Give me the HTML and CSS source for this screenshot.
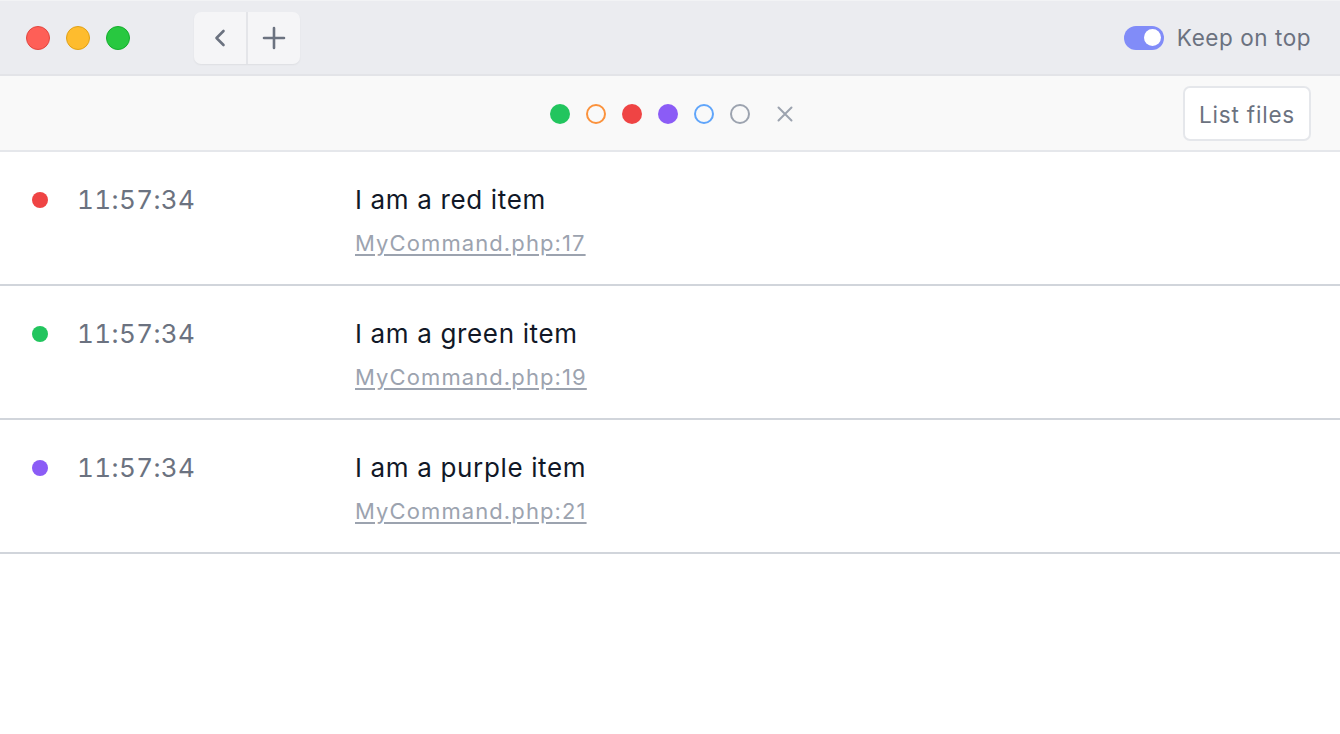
FILE: index.html
```html
<!DOCTYPE html>
<html>
<head>
<meta charset="utf-8">
<link rel="stylesheet" href="styles.css">
</head>
<body>
<div class="app">
  <header class="titlebar">
    <div class="lights">
      <span class="light red"></span>
      <span class="light yellow"></span>
      <span class="light green"></span>
    </div>
    <div class="navgroup">
      <button class="navbtn" aria-label="Back">
        <svg width="20" height="20" viewBox="0 0 20 20"><path d="M13.5 3 L6.5 10 L13.5 17" fill="none" stroke="#6b7280" stroke-width="2.6" stroke-linecap="round" stroke-linejoin="round"/></svg>
      </button>
      <span class="navsep"></span>
      <button class="navbtn" aria-label="New">
        <svg width="24" height="24" viewBox="0 0 24 24"><path d="M12 2 V22 M2 12 H22" fill="none" stroke="#6b7280" stroke-width="2.6" stroke-linecap="round"/></svg>
      </button>
    </div>
    <div class="spacer"></div>
    <label class="keep">
      <span class="toggle"><span class="knob"></span></span>
      <span class="keep-label">Keep on top</span>
    </label>
  </header>

  <div class="toolbar">
    <div></div>
    <div class="filters">
      <span class="fdot solid green-f"></span>
      <span class="fdot ring orange-f"></span>
      <span class="fdot solid red-f"></span>
      <span class="fdot solid purple-f"></span>
      <span class="fdot ring blue-f"></span>
      <span class="fdot ring gray-f"></span>
      <span class="clear">
        <svg width="18" height="18" viewBox="0 0 18 18"><path d="M2.5 2.5 L15.5 15.5 M15.5 2.5 L2.5 15.5" stroke="#9ca3af" stroke-width="2" stroke-linecap="round"/></svg>
      </span>
    </div>
    <div class="tb-right">
      <button class="listbtn">List files</button>
    </div>
  </div>

  <ul class="list">
    <li class="row">
      <span class="dot red-f"></span>
      <span class="time">11:57:34</span>
      <div class="content">
        <div class="msg">I am a red item</div>
        <a class="origin" href="#">MyCommand.php:17</a>
      </div>
    </li>
    <li class="row">
      <span class="dot green-f"></span>
      <span class="time">11:57:34</span>
      <div class="content">
        <div class="msg">I am a green item</div>
        <a class="origin" href="#">MyCommand.php:19</a>
      </div>
    </li>
    <li class="row">
      <span class="dot purple-f"></span>
      <span class="time">11:57:34</span>
      <div class="content">
        <div class="msg">I am a purple item</div>
        <a class="origin" href="#">MyCommand.php:21</a>
      </div>
    </li>
  </ul>
</div>
</body>
</html>
```

FILE: styles.css
```css
* { box-sizing: border-box; }
html, body {
  margin: 0;
  padding: 0;
  background: #ffffff;
  font-family: Inter, "Noto Sans", "Liberation Sans", sans-serif;
}
.app {
  width: 1340px;
  height: 734px;
  overflow: hidden;
  background: #ffffff;
}
.titlebar {
  height: 76px;
  display: flex;
  align-items: center;
  background: #ebecf0;
  border-top: 1px solid #f2f3f5;
  border-bottom: 2px solid #e3e4e8;
  padding: 0 29px 0 26px;
}
.lights {
  display: flex;
  gap: 16px;
}
.light {
  width: 24px;
  height: 24px;
  border-radius: 50%;
  display: block;
}
.light.red { background: #fe5f57; border: 1px solid #e2463f; }
.light.yellow { background: #febc2e; border: 1px solid #e1a116; }
.light.green { background: #28c840; border: 1px solid #14ae2c; }
.navgroup {
  margin-left: 64px;
  display: flex;
  align-items: stretch;
  height: 52px;
  background: #f5f5f7;
  border-radius: 7px;
  box-shadow: 0 1px 2px rgba(0,0,0,0.06);
}
.navbtn {
  width: 52px;
  border: 0;
  background: transparent;
  display: flex;
  align-items: center;
  justify-content: center;
  padding: 0;
}
.navsep {
  width: 2px;
  background: #e4e5e9;
}
.spacer { flex: 1; }
.keep {
  display: flex;
  align-items: center;
  gap: 13px;
}
.toggle {
  width: 40px;
  height: 24px;
  border-radius: 12px;
  background: #818cf8;
  display: flex;
  align-items: center;
  justify-content: flex-end;
  padding-right: 3px;
}
.knob {
  width: 17px;
  height: 17px;
  border-radius: 50%;
  background: #ffffff;
}
.keep-label {
  font-size: 22.5px;
  color: #6b7280;
  letter-spacing: 0.55px;
}
.toolbar {
  height: 76px;
  display: grid;
  grid-template-columns: 1fr auto 1fr;
  align-items: center;
  background: #f9f9f9;
  border-bottom: 2px solid #e5e7eb;
  padding-right: 29px;
  padding-top: 1px;
}
.filters {
  display: flex;
  align-items: center;
  gap: 16px;
  padding-left: 33px;
}
.fdot {
  width: 20px;
  height: 20px;
  border-radius: 50%;
  display: block;
}
.fdot.ring { border: 2px solid currentColor; background: transparent; }
.green-f { background: #22c55e; }
.red-f { background: #ef4444; }
.purple-f { background: #8b5cf6; }
.fdot.orange-f { color: #fb923c; }
.fdot.blue-f { color: #60a5fa; }
.fdot.gray-f { color: #9ca3af; }
.clear {
  margin-left: 10px;
  width: 18px;
  height: 18px;
  display: flex;
}
.tb-right {
  display: flex;
  justify-content: flex-end;
}
.listbtn {
  height: 55px;
  width: 128px;
  background: #ffffff;
  border: 2px solid #e5e7eb;
  border-radius: 7px;
  font-family: inherit;
  font-size: 22.5px;
  letter-spacing: 0.8px;
  color: #6b7280;
  padding: 2px 0 0 0;
}
.list {
  list-style: none;
  margin: 0;
  padding: 0;
}
.row {
  display: flex;
  align-items: flex-start;
  padding: 30px 0 26px 32px;
  border-bottom: 2px solid #d1d5db;
}
.dot {
  width: 16px;
  height: 16px;
  border-radius: 50%;
  margin-top: 10px;
  flex: none;
}
.time {
  margin-left: 29px;
  width: 278px;
  flex: none;
  font-size: 26px;
  line-height: 36px;
  color: #6b7280;
  font-variant-numeric: tabular-nums;
  letter-spacing: 0.4px;
}
.content {
  display: flex;
  flex-direction: column;
  gap: 10px;
}
.msg {
  font-size: 26px;
  line-height: 36px;
  color: #111827;
  letter-spacing: 0.65px;
}
.origin {
  font-size: 22px;
  line-height: 30px;
  color: #9ca3af;
  text-decoration: underline;
  text-underline-offset: 3px;
  letter-spacing: 1.1px;
  align-self: flex-start;
}
```
